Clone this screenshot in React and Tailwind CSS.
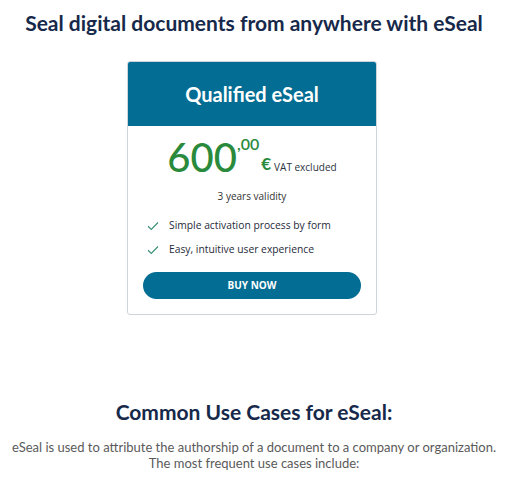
import React from "react";

function Check() {
  return (
    <svg width="12" height="10" viewBox="0 0 12 10" className="shrink-0">
      <path d="M1 5.2 L4.3 8.4 L11 1.5" fill="none" stroke="#3f8f7a" strokeWidth="1.2" />
    </svg>
  );
}

export default function App() {
  return (
    <div className="w-[508px] h-[480px] bg-white overflow-hidden" style={{ fontFamily: "Lato, 'Open Sans', sans-serif" }}>
      <h1 className="pt-[10px] text-center text-[21px] leading-[26px] font-bold text-[#17294a]">
        Seal digital documents from anywhere with eSeal
      </h1>
      <div className="mt-[25px] flex justify-center pr-[4px]">
        <div className="w-[250px] h-[254px] border border-[#cdd5db] rounded-[3px] overflow-hidden flex flex-col">
          <div className="h-[64px] bg-[#036d93] flex items-center justify-center text-white text-[20px] font-bold">
            Qualified eSeal
          </div>
          <div className="flex flex-col items-center">
            <div className="flex items-start mt-[13px] text-[#2a8a3c]">
              <span className="text-[40px] leading-[36px] font-medium">600</span>
              <span className="text-[16px] leading-[16px] font-semibold mt-[-3px]">,00</span>
              <span className="text-[17px] leading-[16px] font-bold mt-[17px] ml-[2px]">€</span>
              <span className="text-[10px] leading-[12px] text-[#2b3440] mt-[22px] ml-[3px] font-['Open_Sans',sans-serif]">VAT excluded</span>
            </div>
            <div className="mt-[14px] text-[10px] text-[#333] font-['Open_Sans',sans-serif]">3 years validity</div>
          </div>
          <div className="mt-[14px] flex flex-col gap-[9px] pl-[19px] font-['Open_Sans',sans-serif] text-[10.3px] text-[#1f2a3a]">
            <div className="flex items-center gap-[10px]"><Check /><span>Simple activation process by form</span></div>
            <div className="flex items-center gap-[10px]"><Check /><span>Easy, intuitive user experience</span></div>
          </div>
          <div className="mt-[14px] mx-[15px] h-[27px] rounded-full bg-[#036d93] flex items-center justify-center text-white text-[10px] font-bold font-['Open_Sans',sans-serif]">
            BUY NOW
          </div>
        </div>
      </div>
      <h2 className="mt-[84px] text-center text-[21px] leading-[26px] font-bold text-[#17294a]">
        Common Use Cases for eSeal:
      </h2>
      <p className="mt-[14px] text-center text-[13px] leading-[16px] text-[#5a5a5a] font-normal">
        eSeal is used to attribute the authorship of a document to a company or organization.
        <br />
        The most frequent use cases include:
      </p>
    </div>
  );
}
